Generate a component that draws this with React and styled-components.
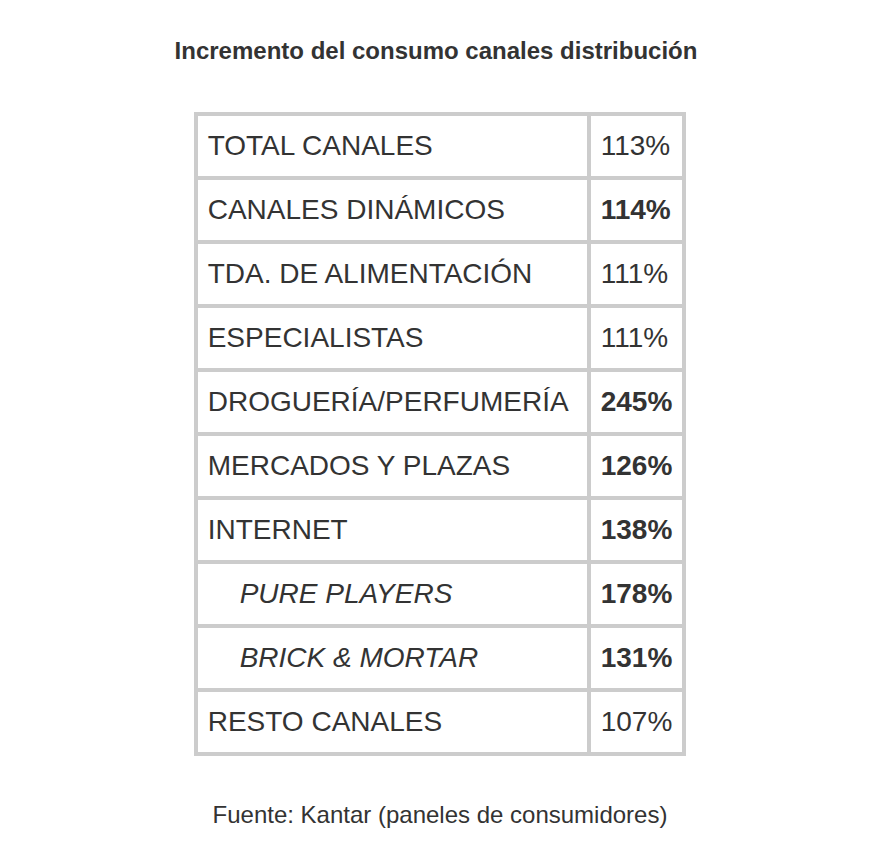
import React from "react"
import styled, {createGlobalStyle} from "styled-components"

const GlobalStyle = createGlobalStyle`
  html, body {
    margin: 0;
    padding: 0;
    background: #ffffff;
  }
  body {
    font-family: "Liberation Sans", Arial, sans-serif;
    color: #333333;
  }
`

const rows = [
  {label: 'TOTAL CANALES', value: '113%'},
  {label: 'CANALES DINÁMICOS', value: '114%', bold: true},
  {label: 'TDA. DE ALIMENTACIÓN', value: '111%'},
  {label: 'ESPECIALISTAS', value: '111%'},
  {label: 'DROGUERÍA/PERFUMERÍA', value: '245%', bold: true},
  {label: 'MERCADOS Y PLAZAS', value: '126%', bold: true},
  {label: 'INTERNET', value: '138%', bold: true},
  {label: 'PURE PLAYERS', value: '178%', bold: true, sub: true},
  {label: 'BRICK & MORTAR', value: '131%', bold: true, sub: true},
  {label: 'RESTO CANALES', value: '107%'},
]

const Page = () => {
  return (
    <Wrapper>
      <Title>Incremento del consumo canales distribución</Title>
      <Table>
        <tbody>
          {rows.map(row => (
            <tr key={row.label}>
              <LabelCell sub={row.sub}>{row.label}</LabelCell>
              <ValueCell bold={row.bold}>{row.value}</ValueCell>
            </tr>
          ))}
        </tbody>
      </Table>
      <Source>Fuente: Kantar (paneles de consumidores)</Source>
    </Wrapper>
  )
}

const Wrapper = styled.div`
  width: 880px;
  padding-top: 36px;
  display: flex;
  flex-direction: column;
  align-items: center;
`

const Title = styled.h3`
  margin: 0;
  padding-right: 8px;
  font-size: 24px;
  line-height: 30px;
  font-weight: bold;
  color: #333333;
`

const Table = styled.table`
  margin-top: 46px;
  border-collapse: collapse;
  border: 4px solid #cccccc;
  td {
    border: 4px solid #cccccc;
    height: 64px;
    padding: 0 10px;
    font-size: 28px;
    color: #333333;
    vertical-align: middle;
    box-sizing: border-box;
  }
`

const LabelCell = styled.td`
  width: 393px;
  padding-left: ${props => props.sub ? '42px' : '10px'} !important;
  font-style: ${props => props.sub ? 'italic' : 'normal'};
  white-space: nowrap;
`

const ValueCell = styled.td`
  width: 95px;
  font-weight: ${props => props.bold ? 'bold' : 'normal'};
`

const Source = styled.p`
  margin: 44px 0 0;
  font-size: 24px;
  line-height: 30px;
  color: #333333;
`

const App = () => (
  <>
    <GlobalStyle />
    <Page />
  </>
)

export default App
